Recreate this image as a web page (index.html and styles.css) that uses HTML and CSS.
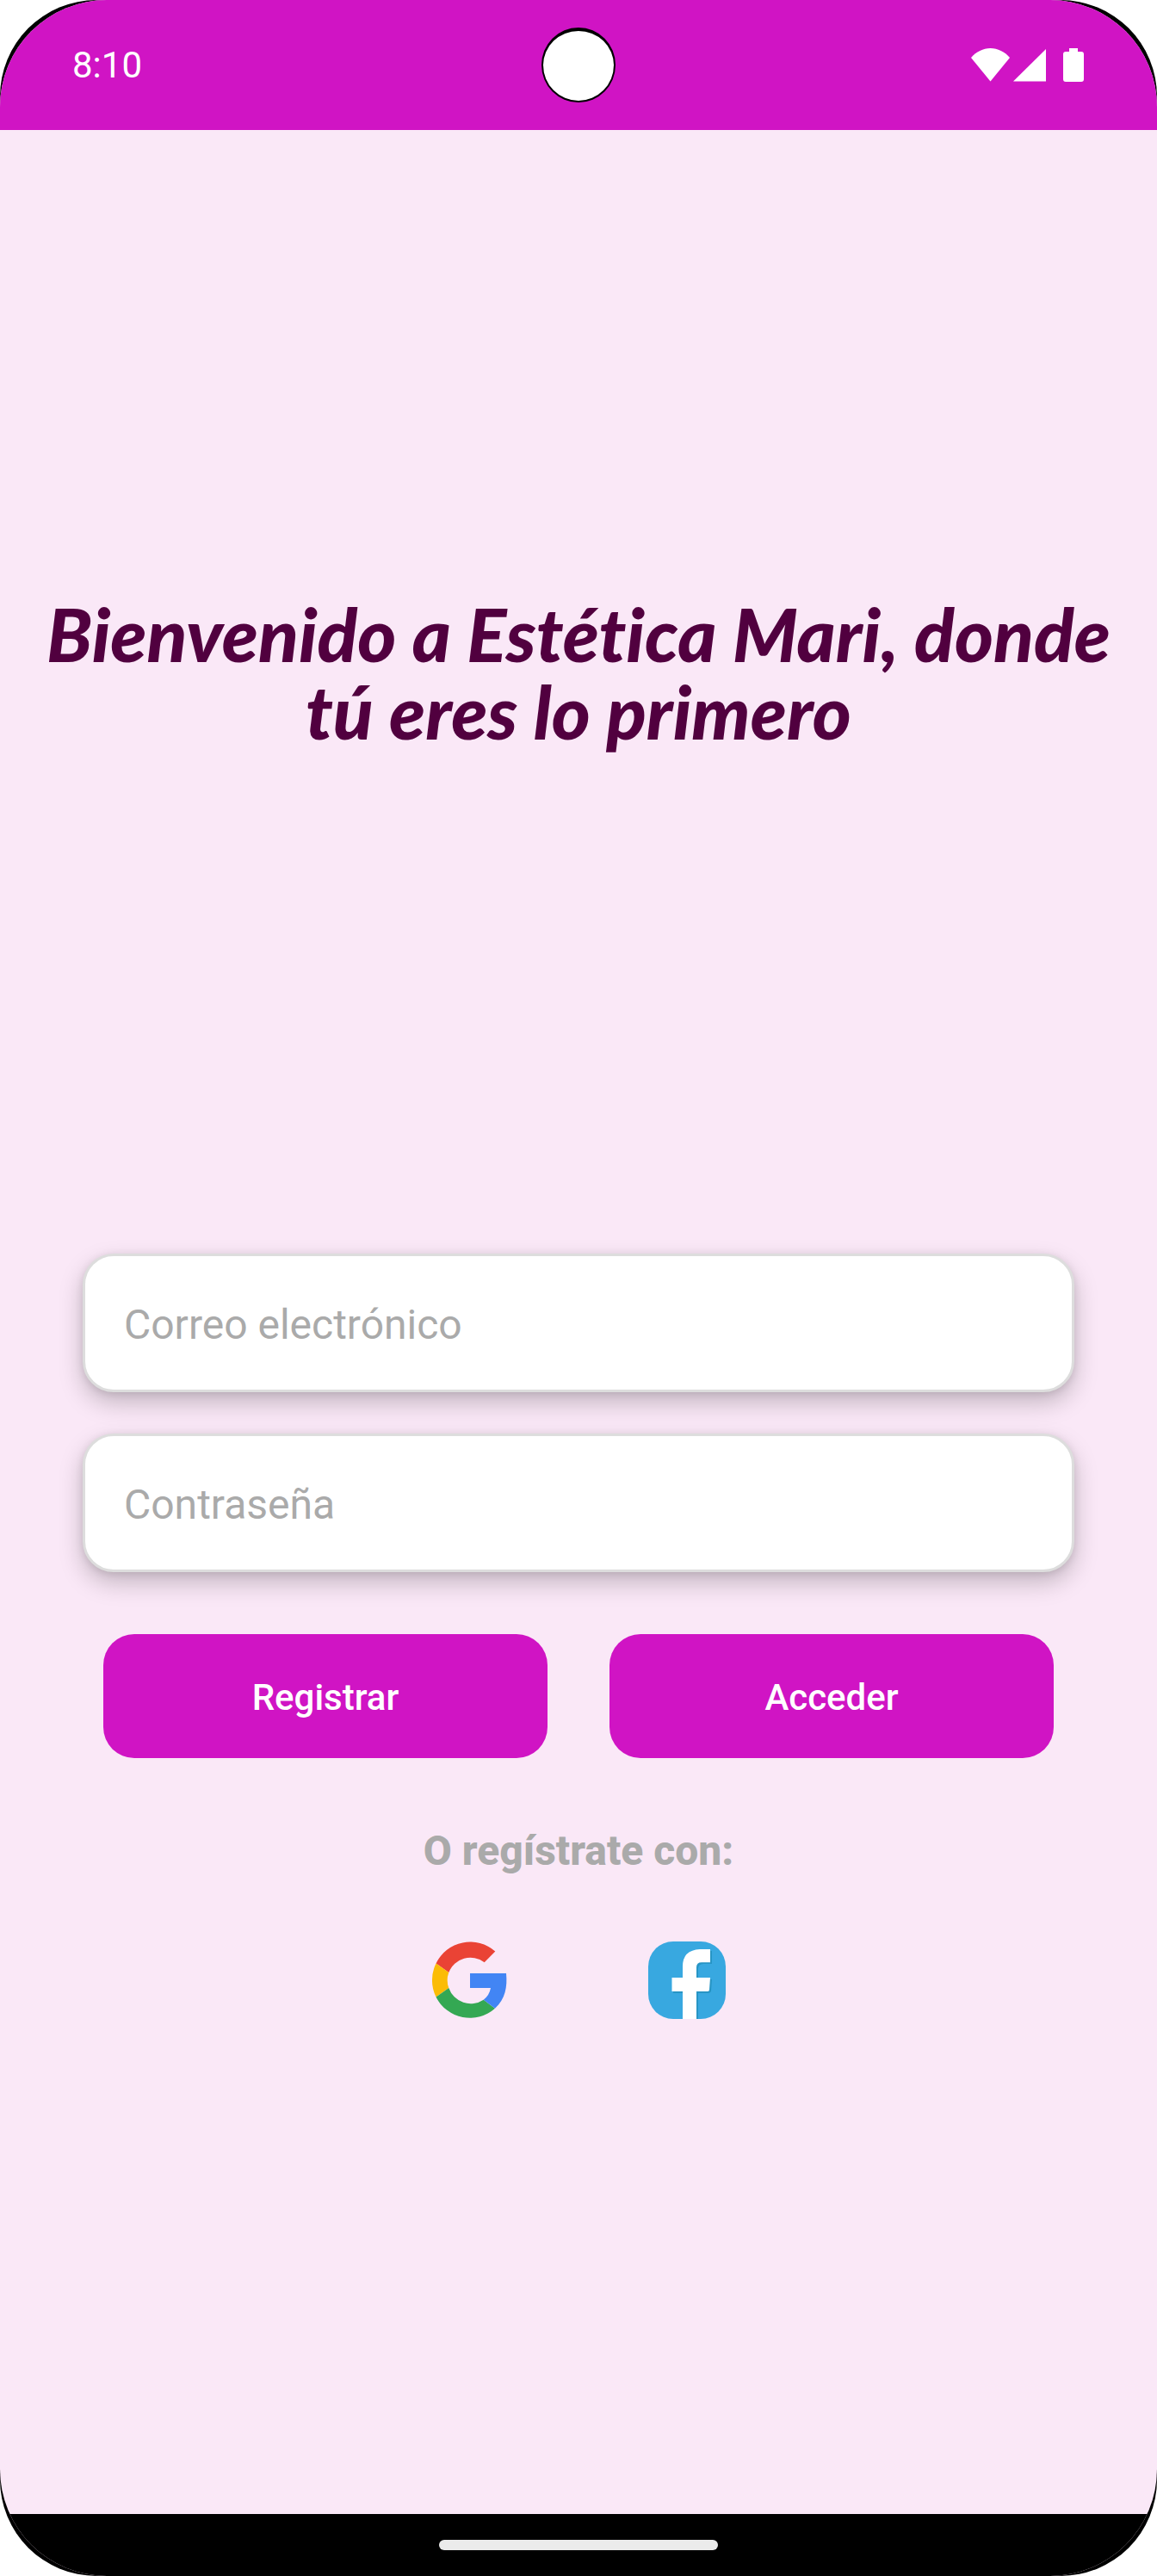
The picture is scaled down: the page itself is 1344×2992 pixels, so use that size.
FILE: index.html
```html
<!DOCTYPE html>
<html lang="es">
<head>
<meta charset="utf-8">
<meta name="viewport" content="width=device-width, initial-scale=1">
<title>Estética Mari</title>
<link rel="stylesheet" href="styles.css">
</head>
<body>
<div class="phone">
  <div class="screen">
    <header class="status-bar">
      <span class="clock">8:10</span>
      <span class="camera" aria-hidden="true"></span>
      <svg class="status-icons" viewBox="0 0 132 40" aria-hidden="true">
        <path d="M0 11C6 4 14 0 22.500 0S39 4 45 11L22.500 38.500Z"/>
        <path d="M49 38.500L87 1V38.500Z"/>
        <path d="M114 0h10v4h4q3 0 3 3v29q0 3-3 3h-18q-3 0-3-3V7q0-3 3-3h4Z"/>
      </svg>
    </header>
    <main class="content">
      <h1 class="welcome">Bienvenido a Estética Mari, donde tú eres lo primero</h1>
      <form class="login">
        <input class="field" type="email" placeholder="Correo electrónico" aria-label="Correo electrónico">
        <input class="field" type="password" placeholder="Contraseña" aria-label="Contraseña">
        <div class="actions">
          <button class="action" type="button">Registrar</button>
          <button class="action" type="submit">Acceder</button>
        </div>
      </form>
      <p class="alternative">O regístrate con:</p>
      <div class="social">
        <button class="social-button" type="button" aria-label="Google">
          <svg class="social-icon" viewBox="0 0 90 90">
            <path fill="#ea4335" d="M5.500 25.500A44 44 0 0 1 74.300 11.500L61.700 24.300A27 27 0 0 0 20.300 36Z"/>
            <path fill="#fbbc05" d="M5.500 25.500A44 44 0 0 0 5.500 64.500L20.300 54A26 26 0 0 1 20.300 36Z"/>
            <path fill="#34a853" d="M5.500 64.500A44 44 0 0 0 74 77.700L60.700 67.700A27 27 0 0 1 20.300 54Z"/>
            <path fill="#4285f4" d="M45 37H87C88.500 53 86 67 74 77.700L60.700 67.700Q67.500 62.500 69 54H45Z"/>
          </svg>
        </button>
        <button class="social-button" type="button" aria-label="Facebook">
          <svg class="social-icon" viewBox="0 0 90 90">
            <rect width="90" height="90" rx="29" fill="#38a8e0"/>
            <path fill="#2795c5" d="M42 90V60H29V44H42V32Q42 12 60 11H74V26H64Q58 26 58 32V44H74L73 58Q72 60 70 60H58V90Z"/>
            <path fill="#fff" d="M40 90V58H27.500V42H40V29Q40 10 60 9H72V24.300H62Q56 24.300 56 30V42H72L71 56Q71 58 69 58H56V90Z"/>
          </svg>
        </button>
      </div>
    </main>
    <footer class="nav-bar"><span class="home-handle"></span></footer>
  </div>
</div>
</body>
</html>
```
FILE: styles.css
```css
* {
  box-sizing: border-box;
}

body {
  margin: 0;
  background: #fff;
  font-family: Roboto, "Liberation Sans", sans-serif;
}

.phone {
  display: flex;
  min-height: 100vh;
  overflow: hidden;
  border-radius: 112px;
  background: #000;
}

.screen {
  display: flex;
  flex: 1;
  flex-direction: column;
  overflow: hidden;
  border-radius: 124px;
  background: #fae8f7;
}

.status-bar {
  display: grid;
  grid-template-columns: 1fr auto 1fr;
  align-items: center;
  height: 151px;
  padding: 0 84px;
  background: #d014c4;
  color: #fff;
}

.clock {
  font-size: 42px;
  line-height: 48px;
}

.camera {
  width: 86px;
  height: 87px;
  border: 2px solid #000;
  border-top-width: 4px;
  border-radius: 50%;
  background: #fff;
}

.status-icons {
  width: 132px;
  height: 40px;
  justify-self: end;
  fill: #fff;
}

.content {
  display: flex;
  flex: 1;
  flex-direction: column;
  align-items: center;
  padding: 540px 48px 0;
}

.welcome {
  margin: 0;
  color: #51003f;
  font-family: Lato, "Liberation Sans", sans-serif;
  font-size: 86px;
  font-style: italic;
  font-variant-ligatures: none;
  font-weight: 900;
  line-height: 90px;
  text-align: center;
}

.login {
  display: flex;
  flex-direction: column;
  gap: 48px;
  align-self: stretch;
  margin: 585px 48px 0;
}

.field {
  width: 100%;
  height: 161px;
  padding: 4px 45px 0;
  border: 3px solid #ddd;
  border-radius: 36px;
  outline: 0;
  background: #fff;
  box-shadow: 0 12px 28px rgba(0, 0, 0, 0.22), 0 2px 10px rgba(0, 0, 0, 0.1);
  color: #333;
  font: 400 48px/56px Roboto, "Liberation Sans", sans-serif;
}

.field::placeholder {
  color: #aaa;
  opacity: 1;
}

.actions {
  display: flex;
  gap: 72px;
  margin: 24px 24px 0;
}

.action {
  flex: 1;
  height: 144px;
  padding: 4px 0 0;
  border: 0;
  border-radius: 36px;
  background: #d014c4;
  color: #fff;
  font: 500 42px/48px Roboto, "Liberation Sans", sans-serif;
}

.alternative {
  margin: 80px 0 0;
  color: #aaa;
  font-size: 48px;
  font-weight: 800;
  line-height: 56px;
}

.social {
  display: flex;
  gap: 162px;
  margin-top: 77px;
}

.social-button {
  display: flex;
  padding: 0;
  border: 0;
  background: none;
}

.social-icon {
  width: 90px;
  height: 90px;
}

.nav-bar {
  display: flex;
  align-items: center;
  justify-content: center;
  height: 72px;
  background: #000;
}

.home-handle {
  width: 324px;
  height: 12px;
  border-radius: 6px;
  background: #ebebeb;
}
```
